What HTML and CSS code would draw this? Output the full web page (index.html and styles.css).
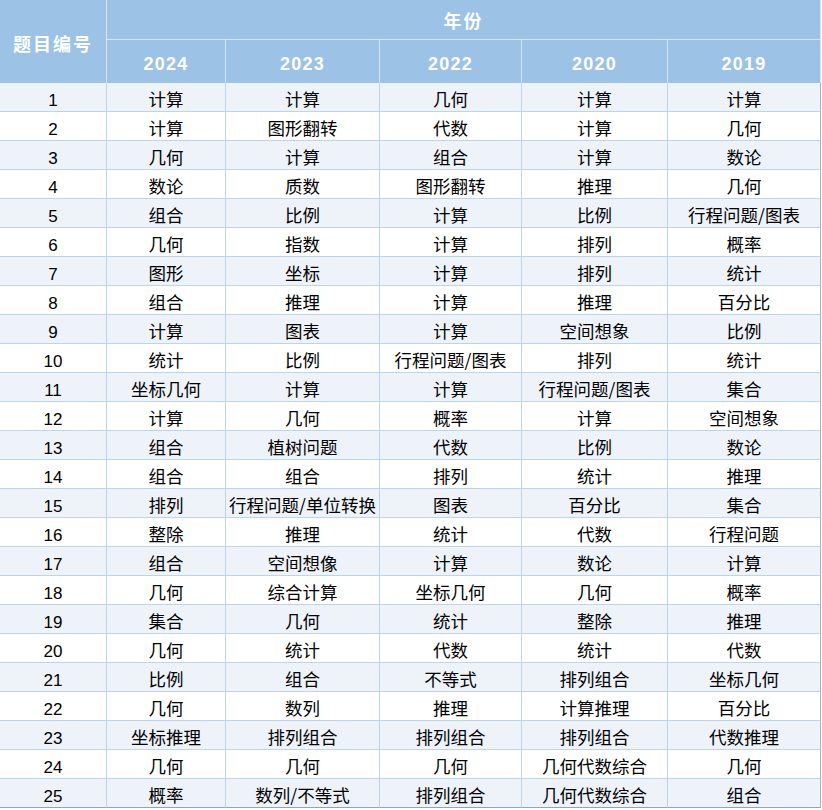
FILE: index.html
```html
<!DOCTYPE html>
<html lang="zh">
<head>
<meta charset="utf-8">
<title>题目编号 年份</title>
<link rel="stylesheet" href="styles.css">
</head>
<body>
<table class="grid">
  <colgroup>
    <col class="c-no">
    <col class="c-2024">
    <col class="c-2023">
    <col class="c-2022">
    <col class="c-2020">
    <col class="c-2019">
  </colgroup>
  <thead>
    <tr class="h1">
      <th rowspan="2" class="h-no">题目编号</th>
      <th colspan="5" class="h-year">年份</th>
    </tr>
    <tr class="h2">
      <th>2024</th><th>2023</th><th>2022</th><th>2020</th><th class="last">2019</th>
    </tr>
  </thead>
  <tbody>
    <tr><td class="no">1</td><td>计算</td><td>计算</td><td>几何</td><td>计算</td><td class="last">计算</td></tr>
    <tr><td class="no">2</td><td>计算</td><td>图形翻转</td><td>代数</td><td>计算</td><td class="last">几何</td></tr>
    <tr><td class="no">3</td><td>几何</td><td>计算</td><td>组合</td><td>计算</td><td class="last">数论</td></tr>
    <tr><td class="no">4</td><td>数论</td><td>质数</td><td>图形翻转</td><td>推理</td><td class="last">几何</td></tr>
    <tr><td class="no">5</td><td>组合</td><td>比例</td><td>计算</td><td>比例</td><td class="last">行程问题/图表</td></tr>
    <tr><td class="no">6</td><td>几何</td><td>指数</td><td>计算</td><td>排列</td><td class="last">概率</td></tr>
    <tr><td class="no">7</td><td>图形</td><td>坐标</td><td>计算</td><td>排列</td><td class="last">统计</td></tr>
    <tr><td class="no">8</td><td>组合</td><td>推理</td><td>计算</td><td>推理</td><td class="last">百分比</td></tr>
    <tr><td class="no">9</td><td>计算</td><td>图表</td><td>计算</td><td>空间想象</td><td class="last">比例</td></tr>
    <tr><td class="no">10</td><td>统计</td><td>比例</td><td>行程问题/图表</td><td>排列</td><td class="last">统计</td></tr>
    <tr><td class="no">11</td><td>坐标几何</td><td>计算</td><td>计算</td><td>行程问题/图表</td><td class="last">集合</td></tr>
    <tr><td class="no">12</td><td>计算</td><td>几何</td><td>概率</td><td>计算</td><td class="last">空间想象</td></tr>
    <tr><td class="no">13</td><td>组合</td><td>植树问题</td><td>代数</td><td>比例</td><td class="last">数论</td></tr>
    <tr><td class="no">14</td><td>组合</td><td>组合</td><td>排列</td><td>统计</td><td class="last">推理</td></tr>
    <tr><td class="no">15</td><td>排列</td><td>行程问题/单位转换</td><td>图表</td><td>百分比</td><td class="last">集合</td></tr>
    <tr><td class="no">16</td><td>整除</td><td>推理</td><td>统计</td><td>代数</td><td class="last">行程问题</td></tr>
    <tr><td class="no">17</td><td>组合</td><td>空间想像</td><td>计算</td><td>数论</td><td class="last">计算</td></tr>
    <tr><td class="no">18</td><td>几何</td><td>综合计算</td><td>坐标几何</td><td>几何</td><td class="last">概率</td></tr>
    <tr><td class="no">19</td><td>集合</td><td>几何</td><td>统计</td><td>整除</td><td class="last">推理</td></tr>
    <tr><td class="no">20</td><td>几何</td><td>统计</td><td>代数</td><td>统计</td><td class="last">代数</td></tr>
    <tr><td class="no">21</td><td>比例</td><td>组合</td><td>不等式</td><td>排列组合</td><td class="last">坐标几何</td></tr>
    <tr><td class="no">22</td><td>几何</td><td>数列</td><td>推理</td><td>计算推理</td><td class="last">百分比</td></tr>
    <tr><td class="no">23</td><td>坐标推理</td><td>排列组合</td><td>排列组合</td><td>排列组合</td><td class="last">代数推理</td></tr>
    <tr><td class="no">24</td><td>几何</td><td>几何</td><td>几何</td><td>几何代数综合</td><td class="last">几何</td></tr>
    <tr class="final"><td class="no">25</td><td>概率</td><td>数列/不等式</td><td>排列组合</td><td>几何代数综合</td><td class="last">组合</td></tr>
  </tbody>
</table>
</body>
</html>
```
FILE: styles.css
```css
html, body {
  margin: 0;
  padding: 0;
  background: #ffffff;
}

.grid {
  border-collapse: separate;
  border-spacing: 0;
  table-layout: fixed;
  width: 821px;
  font-family: "Noto Sans CJK SC", "Liberation Sans", sans-serif;
  color: #000;
}

.c-no { width: 107px; }
.c-2024 { width: 119px; }
.c-2023 { width: 154px; }
.c-2022 { width: 142px; }
.c-2020 { width: 146px; }
.c-2019 { width: 153px; }

th {
  background: #9cc2e5;
  color: #ffffff;
  font-weight: 700;
  padding: 0;
  text-align: center;
  border-right: 1px solid #d6e6f5;
  box-sizing: border-box;
}

.h1 { height: 40px; }
.h1 th.h-year {
  border-bottom: 1px solid #d6e6f5;
  font-size: 18px;
  letter-spacing: 2px;
  padding-top: 0;
}
.h1 th.h-no {
  font-size: 18px;
  letter-spacing: 2px;
  padding-top: 2px;
}

.h2 { height: 43px; }
.h2 th {
  font-family: "Liberation Sans", "Noto Sans CJK SC", sans-serif;
  font-size: 18px;
  letter-spacing: 1.2px;
  padding-top: 5px;
}
th.last, td.last { border-right: 1px solid #9cb5cf; }
.h2 th.last { border-right: 1px solid #d6e6f5; }

tbody tr { height: 29px; }
tbody tr:nth-child(odd) td { background: #eef3fa; }
tbody tr:nth-child(even) td { background: #ffffff; }

td {
  padding: 3px 0 0 0;
  text-align: center;
  font-size: 17.5px;
  line-height: 25px;
  border-right: 1px solid #bcd4ec;
  border-bottom: 1px solid #bcd4ec;
  box-sizing: border-box;
  white-space: nowrap;
}

td.no {
  font-family: "Liberation Sans", sans-serif;
  font-size: 17px;
  padding-top: 7px;
  line-height: 21px;
}

tr.final td { border-bottom: 1px solid #8aa6c4; }
```
